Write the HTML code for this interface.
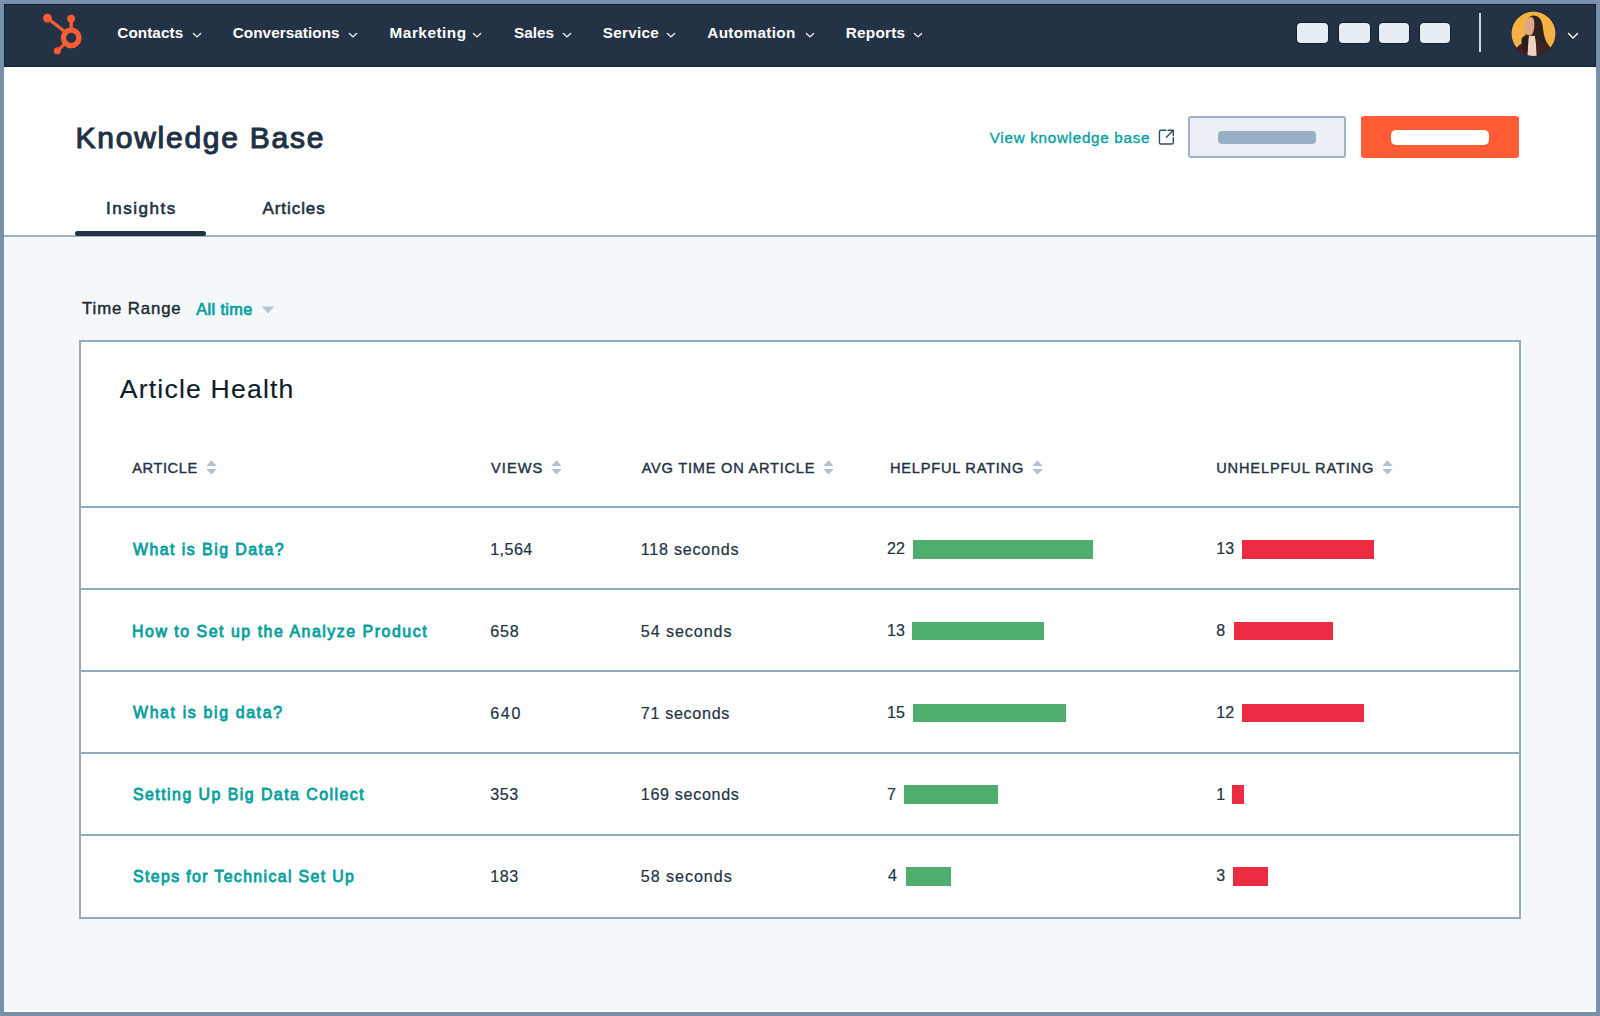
<!DOCTYPE html>
<html><head><meta charset="utf-8"><style>
html,body{margin:0;padding:0;}
body{width:1600px;height:1016px;overflow:hidden;position:relative;background:#7890ab;font-family:"Liberation Sans",sans-serif;}
.t{position:absolute;white-space:nowrap;line-height:1;}
.r{position:absolute;}
</style></head><body>
<div class="r" style="left:4px;top:4px;width:1592px;height:1008px;background:#ffffff;"></div>
<div class="r" style="left:4px;top:4px;width:1591px;height:1007px;background:#f5f8fa;"></div>
<div class="r" style="left:4px;top:4px;width:1592px;height:62px;background:#233345;"></div>
<div class="r" style="left:4px;top:65px;width:1592px;height:1.5px;background:#142a3e;"></div>
<div class="r" style="left:4px;top:4px;width:1592px;height:1px;background:#0d2230;"></div>
<div class="r" style="left:4px;top:4px;width:1px;height:62px;background:#0d2230;"></div>
<div class="r" style="left:1595px;top:4px;width:1px;height:62px;background:#0d2230;"></div>
<svg class="r" style="left:0;top:0" width="100" height="66" viewBox="0 0 100 66">
<g fill="#ff5c35" stroke="none">
<circle cx="47.5" cy="18.2" r="4.4"/>
<circle cx="71.1" cy="18.6" r="3.9"/>
<circle cx="57.4" cy="50.8" r="3.5"/>
</g>
<g stroke="#ff5c35" fill="none">
<circle cx="71.2" cy="37.8" r="7.75" stroke-width="5.3"/>
<line x1="47.5" y1="18.2" x2="64" y2="31" stroke-width="3.3"/>
<line x1="71.2" y1="19" x2="71.2" y2="30" stroke-width="3.4"/>
<line x1="57.4" y1="50.8" x2="65" y2="43.5" stroke-width="3"/>
</g></svg>
<div class="t" style="left:117.30px;top:25.14px;font-size:15.3px;font-weight:700;color:#ffffff;letter-spacing:0.057px;">Contacts</div>
<svg class="r" style="left:191.5px;top:31px" width="10" height="8" viewBox="0 0 10 8"><path d="M1.4 2.5 L5 5.9 L8.6 2.5" stroke="#fff" stroke-width="1.25" fill="none" stroke-linecap="round" stroke-linejoin="round"/></svg>
<div class="t" style="left:232.70px;top:25.14px;font-size:15.3px;font-weight:700;color:#ffffff;letter-spacing:0.050px;">Conversations</div>
<svg class="r" style="left:348.1px;top:31px" width="10" height="8" viewBox="0 0 10 8"><path d="M1.4 2.5 L5 5.9 L8.6 2.5" stroke="#fff" stroke-width="1.25" fill="none" stroke-linecap="round" stroke-linejoin="round"/></svg>
<div class="t" style="left:389.60px;top:25.14px;font-size:15.3px;font-weight:700;color:#ffffff;letter-spacing:0.525px;">Marketing</div>
<svg class="r" style="left:472.4px;top:31px" width="10" height="8" viewBox="0 0 10 8"><path d="M1.4 2.5 L5 5.9 L8.6 2.5" stroke="#fff" stroke-width="1.25" fill="none" stroke-linecap="round" stroke-linejoin="round"/></svg>
<div class="t" style="left:514.00px;top:25.14px;font-size:15.3px;font-weight:700;color:#ffffff;letter-spacing:0.000px;">Sales</div>
<svg class="r" style="left:562.0px;top:31px" width="10" height="8" viewBox="0 0 10 8"><path d="M1.4 2.5 L5 5.9 L8.6 2.5" stroke="#fff" stroke-width="1.25" fill="none" stroke-linecap="round" stroke-linejoin="round"/></svg>
<div class="t" style="left:602.75px;top:25.14px;font-size:15.3px;font-weight:700;color:#ffffff;letter-spacing:0.250px;">Service</div>
<svg class="r" style="left:666.4px;top:31px" width="10" height="8" viewBox="0 0 10 8"><path d="M1.4 2.5 L5 5.9 L8.6 2.5" stroke="#fff" stroke-width="1.25" fill="none" stroke-linecap="round" stroke-linejoin="round"/></svg>
<div class="t" style="left:707.25px;top:25.14px;font-size:15.3px;font-weight:700;color:#ffffff;letter-spacing:0.344px;">Automation</div>
<svg class="r" style="left:805.2px;top:31px" width="10" height="8" viewBox="0 0 10 8"><path d="M1.4 2.5 L5 5.9 L8.6 2.5" stroke="#fff" stroke-width="1.25" fill="none" stroke-linecap="round" stroke-linejoin="round"/></svg>
<div class="t" style="left:845.70px;top:25.14px;font-size:15.3px;font-weight:700;color:#ffffff;letter-spacing:0.267px;">Reports</div>
<svg class="r" style="left:912.5px;top:31px" width="10" height="8" viewBox="0 0 10 8"><path d="M1.4 2.5 L5 5.9 L8.6 2.5" stroke="#fff" stroke-width="1.25" fill="none" stroke-linecap="round" stroke-linejoin="round"/></svg>
<div class="r" style="left:1297.4px;top:23px;width:30.7px;height:20px;background:#e6edf5;border-radius:4px;box-shadow:0 0 0 0.8px #0b1b2c"></div>
<div class="r" style="left:1339px;top:23px;width:31px;height:20px;background:#e6edf5;border-radius:4px;box-shadow:0 0 0 0.8px #0b1b2c"></div>
<div class="r" style="left:1379px;top:23px;width:30px;height:20px;background:#e6edf5;border-radius:4px;box-shadow:0 0 0 0.8px #0b1b2c"></div>
<div class="r" style="left:1420px;top:23px;width:30px;height:20px;background:#e6edf5;border-radius:4px;box-shadow:0 0 0 0.8px #0b1b2c"></div>
<div class="r" style="left:1479px;top:13px;width:2px;height:39px;background:#cfd6de;"></div>
<svg class="r" style="left:1510.8px;top:11.1px" width="45" height="45" viewBox="0 0 45 45">
<defs><clipPath id="av"><circle cx="22.5" cy="22.5" r="22.5"/></clipPath></defs>
<circle cx="22.5" cy="22.5" r="22.6" fill="#0e2236"/>
<circle cx="22.5" cy="22.5" r="22" fill="#f5b244"/>
<g clip-path="url(#av)">
<path d="M21.5 4.6 C27 4 30.5 8 31.5 14 C32.5 21 33 27 36 32 C39 36 42 40 43 46 L6 46 C8 40 11 35 13.5 31 C15 27 14.5 22 15 17 C15.5 10 17.5 5.2 21.5 4.6 Z" fill="#2f221d"/>
<path d="M20 6 C16.5 6.5 14.5 10 14 14.5 C13.7 17 13.2 18.5 13.5 20.5 C14.3 22.8 16 24.8 19 24.5 C21.8 24 23 20 23.3 15 C23.5 10 23 6 20 6 Z" fill="#dfa687"/>
<path d="M17.8 25 L23.8 24.8 C24.5 30 26 38 26.5 46 L15.5 46 C16 38 17 30 17.8 25 Z" fill="#efd3be"/>
<path d="M2 46 C3 40 6 35 10 33 L17 31.5 L16.5 46 Z" fill="#4d1b24"/>
<path d="M10.5 28 C12 25 14.5 23.5 17.5 24.5 C17.5 31 17 37 16 42 C13.5 41 11.5 39 10.5 36 Z" fill="#2a1e1a"/>
<path d="M25 26 C28 28 32 31 36 34 C40 37 42 41 42 46 L25.5 46 Z" fill="#3a2520"/>
</g></svg>
<svg class="r" style="left:1566.5px;top:31px" width="12" height="9" viewBox="0 0 12 9"><path d="M1.5 2.5 L6 7 L10.5 2.5" stroke="#fff" stroke-width="1.4" fill="none" stroke-linecap="round" stroke-linejoin="round"/></svg>
<div class="r" style="left:4px;top:66.5px;width:1592px;height:169px;background:#ffffff;"></div>
<div class="r" style="left:4px;top:235px;width:1592px;height:1.6px;background:#9fb2c6;"></div>
<div class="t" style="left:75.50px;top:122.59px;font-size:30px;font-weight:400;color:#1f3245;letter-spacing:1.754px;-webkit-text-stroke:1.1px #1f3245;">Knowledge Base</div>
<div class="t" style="left:989.80px;top:130.03px;font-size:15.2px;font-weight:400;color:#07a09e;letter-spacing:0.722px;-webkit-text-stroke:0.35px #07a09e;">View knowledge base</div>
<svg class="r" style="left:1150px;top:122px" width="32" height="30" viewBox="0 0 32 30">
<path d="M15.9 8.3 H11 Q9.45 8.3 9.45 9.9 V20.5 Q9.45 22.05 11 22.05 H21.7 Q23.3 22.05 23.3 20.5 V15.6" stroke="#2d4d6b" stroke-width="1.4" fill="none" stroke-linecap="round"/>
<path d="M18 8.3 H23.3 V13.6 M16.4 15.3 L23 8.6" stroke="#2d4d6b" stroke-width="1.4" fill="none" stroke-linecap="round" stroke-linejoin="round"/>
</svg>
<div class="r" style="left:1188.4px;top:116.3px;width:157.6px;height:41.3px;background:#eaf0f6;border:2px solid #9fb3c8;border-radius:3px;box-sizing:border-box"></div>
<div class="r" style="left:1218px;top:130.6px;width:98px;height:13.5px;background:#99afc6;border-radius:4px"></div>
<div class="r" style="left:1361.25px;top:116.3px;width:157.75px;height:41.6px;background:#ff5c35;border-radius:3px"></div>
<div class="r" style="left:1391px;top:130.2px;width:98.3px;height:14.4px;background:#ffffff;border-radius:5px"></div>
<div class="t" style="left:105.90px;top:200.20px;font-size:17.0px;font-weight:400;color:#1f3245;letter-spacing:1.543px;-webkit-text-stroke:0.6px #1f3245;">Insights</div>
<div class="t" style="left:262.50px;top:200.20px;font-size:17.0px;font-weight:400;color:#1f3245;letter-spacing:0.929px;-webkit-text-stroke:0.6px #1f3245;">Articles</div>
<div class="r" style="left:75.4px;top:230.75px;width:130.6px;height:5.25px;background:#213343;border-radius:3px"></div>
<div class="t" style="left:82.10px;top:301.47px;font-size:16.8px;font-weight:400;color:#1b2633;letter-spacing:0.867px;-webkit-text-stroke:0.4px #1b2633;">Time Range</div>
<div class="t" style="left:196.20px;top:301.39px;font-size:16.3px;font-weight:400;color:#07a09e;letter-spacing:0.400px;-webkit-text-stroke:0.7px #07a09e;">All time</div>
<svg class="r" style="left:261px;top:305.5px" width="14" height="8" viewBox="0 0 14 8"><path d="M0.5 0.5 H13.5 L7 7.3 Z" fill="#b3c3d3"/></svg>
<div class="r" style="left:79px;top:340px;width:1442px;height:579px;background:#ffffff;border:2px solid #93a9bf;box-sizing:border-box"></div>
<div class="t" style="left:119.75px;top:376.27px;font-size:26.6px;font-weight:400;color:#0f1d2c;letter-spacing:1.192px;-webkit-text-stroke:0.15px #0f1d2c;">Article Health</div>
<div class="t" style="left:132.20px;top:460.63px;font-size:14.6px;font-weight:400;color:#1f3245;letter-spacing:0.600px;-webkit-text-stroke:0.4px #1f3245;">ARTICLE</div>
<svg class="r" style="left:206.25px;top:460px" width="11" height="15" viewBox="0 0 11 15"><path d="M0.3 5.9 L5.5 0.3 L10.7 5.9 Z M0.3 9 L5.5 14.7 L10.7 9 Z" fill="#b3c3d3"/></svg>
<div class="t" style="left:491.00px;top:460.63px;font-size:14.6px;font-weight:400;color:#1f3245;letter-spacing:1.050px;-webkit-text-stroke:0.4px #1f3245;">VIEWS</div>
<svg class="r" style="left:551px;top:460px" width="11" height="15" viewBox="0 0 11 15"><path d="M0.3 5.9 L5.5 0.3 L10.7 5.9 Z M0.3 9 L5.5 14.7 L10.7 9 Z" fill="#b3c3d3"/></svg>
<div class="t" style="left:641.70px;top:460.63px;font-size:14.6px;font-weight:400;color:#1f3245;letter-spacing:0.767px;-webkit-text-stroke:0.4px #1f3245;">AVG TIME ON ARTICLE</div>
<svg class="r" style="left:822.6px;top:460px" width="11" height="15" viewBox="0 0 11 15"><path d="M0.3 5.9 L5.5 0.3 L10.7 5.9 Z M0.3 9 L5.5 14.7 L10.7 9 Z" fill="#b3c3d3"/></svg>
<div class="t" style="left:890.00px;top:460.63px;font-size:14.6px;font-weight:400;color:#1f3245;letter-spacing:0.769px;-webkit-text-stroke:0.4px #1f3245;">HELPFUL RATING</div>
<svg class="r" style="left:1032px;top:460px" width="11" height="15" viewBox="0 0 11 15"><path d="M0.3 5.9 L5.5 0.3 L10.7 5.9 Z M0.3 9 L5.5 14.7 L10.7 9 Z" fill="#b3c3d3"/></svg>
<div class="t" style="left:1216.20px;top:460.63px;font-size:14.6px;font-weight:400;color:#1f3245;letter-spacing:0.853px;-webkit-text-stroke:0.4px #1f3245;">UNHELPFUL RATING</div>
<svg class="r" style="left:1382.25px;top:460px" width="11" height="15" viewBox="0 0 11 15"><path d="M0.3 5.9 L5.5 0.3 L10.7 5.9 Z M0.3 9 L5.5 14.7 L10.7 9 Z" fill="#b3c3d3"/></svg>
<div class="r" style="left:81px;top:506px;width:1438px;height:2px;background:#93a9bf;"></div>
<div class="r" style="left:81px;top:588px;width:1438px;height:2px;background:#93a9bf;"></div>
<div class="r" style="left:81px;top:670px;width:1438px;height:2px;background:#93a9bf;"></div>
<div class="r" style="left:81px;top:752px;width:1438px;height:2px;background:#93a9bf;"></div>
<div class="r" style="left:81px;top:834px;width:1438px;height:2px;background:#93a9bf;"></div>
<div class="t" style="left:133.00px;top:541.83px;font-size:15.9px;font-weight:400;color:#07a09e;letter-spacing:1.462px;-webkit-text-stroke:0.8px #07a09e;">What is Big Data?</div>
<div class="t" style="left:490.20px;top:541.16px;font-size:16.1px;font-weight:400;color:#213343;letter-spacing:0.450px;-webkit-text-stroke:0.2px #213343;">1,564</div>
<div class="t" style="left:640.80px;top:541.16px;font-size:16.1px;font-weight:400;color:#213343;letter-spacing:0.760px;-webkit-text-stroke:0.2px #213343;">118 seconds</div>
<div class="t" style="left:887.00px;top:541.25px;font-size:16.0px;font-weight:400;color:#213343;letter-spacing:0.000px;-webkit-text-stroke:0.2px #213343;">22</div>
<div class="r" style="left:913.2px;top:540.0px;width:179.8px;height:18.5px;background:#4fae6d;"></div>
<div class="t" style="left:1216.30px;top:541.25px;font-size:16.0px;font-weight:400;color:#213343;letter-spacing:0.000px;-webkit-text-stroke:0.2px #213343;">13</div>
<div class="r" style="left:1241.9px;top:540.0px;width:131.8px;height:18.5px;background:#eb2c43;"></div>
<div class="t" style="left:132.00px;top:623.58px;font-size:15.9px;font-weight:400;color:#07a09e;letter-spacing:1.531px;-webkit-text-stroke:0.8px #07a09e;">How to Set up the Analyze Product</div>
<div class="t" style="left:490.20px;top:622.91px;font-size:16.1px;font-weight:400;color:#213343;letter-spacing:0.800px;-webkit-text-stroke:0.2px #213343;">658</div>
<div class="t" style="left:640.80px;top:622.91px;font-size:16.1px;font-weight:400;color:#213343;letter-spacing:0.933px;-webkit-text-stroke:0.2px #213343;">54 seconds</div>
<div class="t" style="left:887.00px;top:623.00px;font-size:16.0px;font-weight:400;color:#213343;letter-spacing:0.000px;-webkit-text-stroke:0.2px #213343;">13</div>
<div class="r" style="left:912px;top:621.75px;width:132.3px;height:18.5px;background:#4fae6d;"></div>
<div class="t" style="left:1216.30px;top:623.00px;font-size:16.0px;font-weight:400;color:#213343;letter-spacing:0.000px;-webkit-text-stroke:0.2px #213343;">8</div>
<div class="r" style="left:1233.8px;top:621.75px;width:99.0px;height:18.5px;background:#eb2c43;"></div>
<div class="t" style="left:133.00px;top:705.33px;font-size:15.9px;font-weight:400;color:#07a09e;letter-spacing:1.638px;-webkit-text-stroke:0.8px #07a09e;">What is big data?</div>
<div class="t" style="left:490.20px;top:704.66px;font-size:16.1px;font-weight:400;color:#213343;letter-spacing:1.700px;-webkit-text-stroke:0.2px #213343;">640</div>
<div class="t" style="left:640.80px;top:704.66px;font-size:16.1px;font-weight:400;color:#213343;letter-spacing:0.689px;-webkit-text-stroke:0.2px #213343;">71 seconds</div>
<div class="t" style="left:887.00px;top:704.75px;font-size:16.0px;font-weight:400;color:#213343;letter-spacing:0.000px;-webkit-text-stroke:0.2px #213343;">15</div>
<div class="r" style="left:913.2px;top:703.5px;width:153.0px;height:18.5px;background:#4fae6d;"></div>
<div class="t" style="left:1216.30px;top:704.75px;font-size:16.0px;font-weight:400;color:#213343;letter-spacing:0.000px;-webkit-text-stroke:0.2px #213343;">12</div>
<div class="r" style="left:1241.9px;top:703.5px;width:122.1px;height:18.5px;background:#eb2c43;"></div>
<div class="t" style="left:133.00px;top:787.08px;font-size:15.9px;font-weight:400;color:#07a09e;letter-spacing:1.462px;-webkit-text-stroke:0.8px #07a09e;">Setting Up Big Data Collect</div>
<div class="t" style="left:490.20px;top:786.41px;font-size:16.1px;font-weight:400;color:#213343;letter-spacing:0.600px;-webkit-text-stroke:0.2px #213343;">353</div>
<div class="t" style="left:640.80px;top:786.41px;font-size:16.1px;font-weight:400;color:#213343;letter-spacing:0.680px;-webkit-text-stroke:0.2px #213343;">169 seconds</div>
<div class="t" style="left:887.00px;top:786.50px;font-size:16.0px;font-weight:400;color:#213343;letter-spacing:0.000px;-webkit-text-stroke:0.2px #213343;">7</div>
<div class="r" style="left:903.8px;top:785.25px;width:94.4px;height:18.5px;background:#4fae6d;"></div>
<div class="t" style="left:1216.30px;top:786.50px;font-size:16.0px;font-weight:400;color:#213343;letter-spacing:0.000px;-webkit-text-stroke:0.2px #213343;">1</div>
<div class="r" style="left:1232px;top:785.25px;width:12px;height:18.5px;background:#eb2c43;"></div>
<div class="t" style="left:133.00px;top:868.83px;font-size:15.9px;font-weight:400;color:#07a09e;letter-spacing:1.360px;-webkit-text-stroke:0.8px #07a09e;">Steps for Technical Set Up</div>
<div class="t" style="left:490.20px;top:868.16px;font-size:16.1px;font-weight:400;color:#213343;letter-spacing:0.600px;-webkit-text-stroke:0.2px #213343;">183</div>
<div class="t" style="left:640.80px;top:868.16px;font-size:16.1px;font-weight:400;color:#213343;letter-spacing:0.956px;-webkit-text-stroke:0.2px #213343;">58 seconds</div>
<div class="t" style="left:888.00px;top:868.25px;font-size:16.0px;font-weight:400;color:#213343;letter-spacing:0.000px;-webkit-text-stroke:0.2px #213343;">4</div>
<div class="r" style="left:905.8px;top:867.0px;width:45.0px;height:18.5px;background:#4fae6d;"></div>
<div class="t" style="left:1216.30px;top:868.25px;font-size:16.0px;font-weight:400;color:#213343;letter-spacing:0.000px;-webkit-text-stroke:0.2px #213343;">3</div>
<div class="r" style="left:1233.1px;top:867.0px;width:35.2px;height:18.5px;background:#eb2c43;"></div>
</body></html>
